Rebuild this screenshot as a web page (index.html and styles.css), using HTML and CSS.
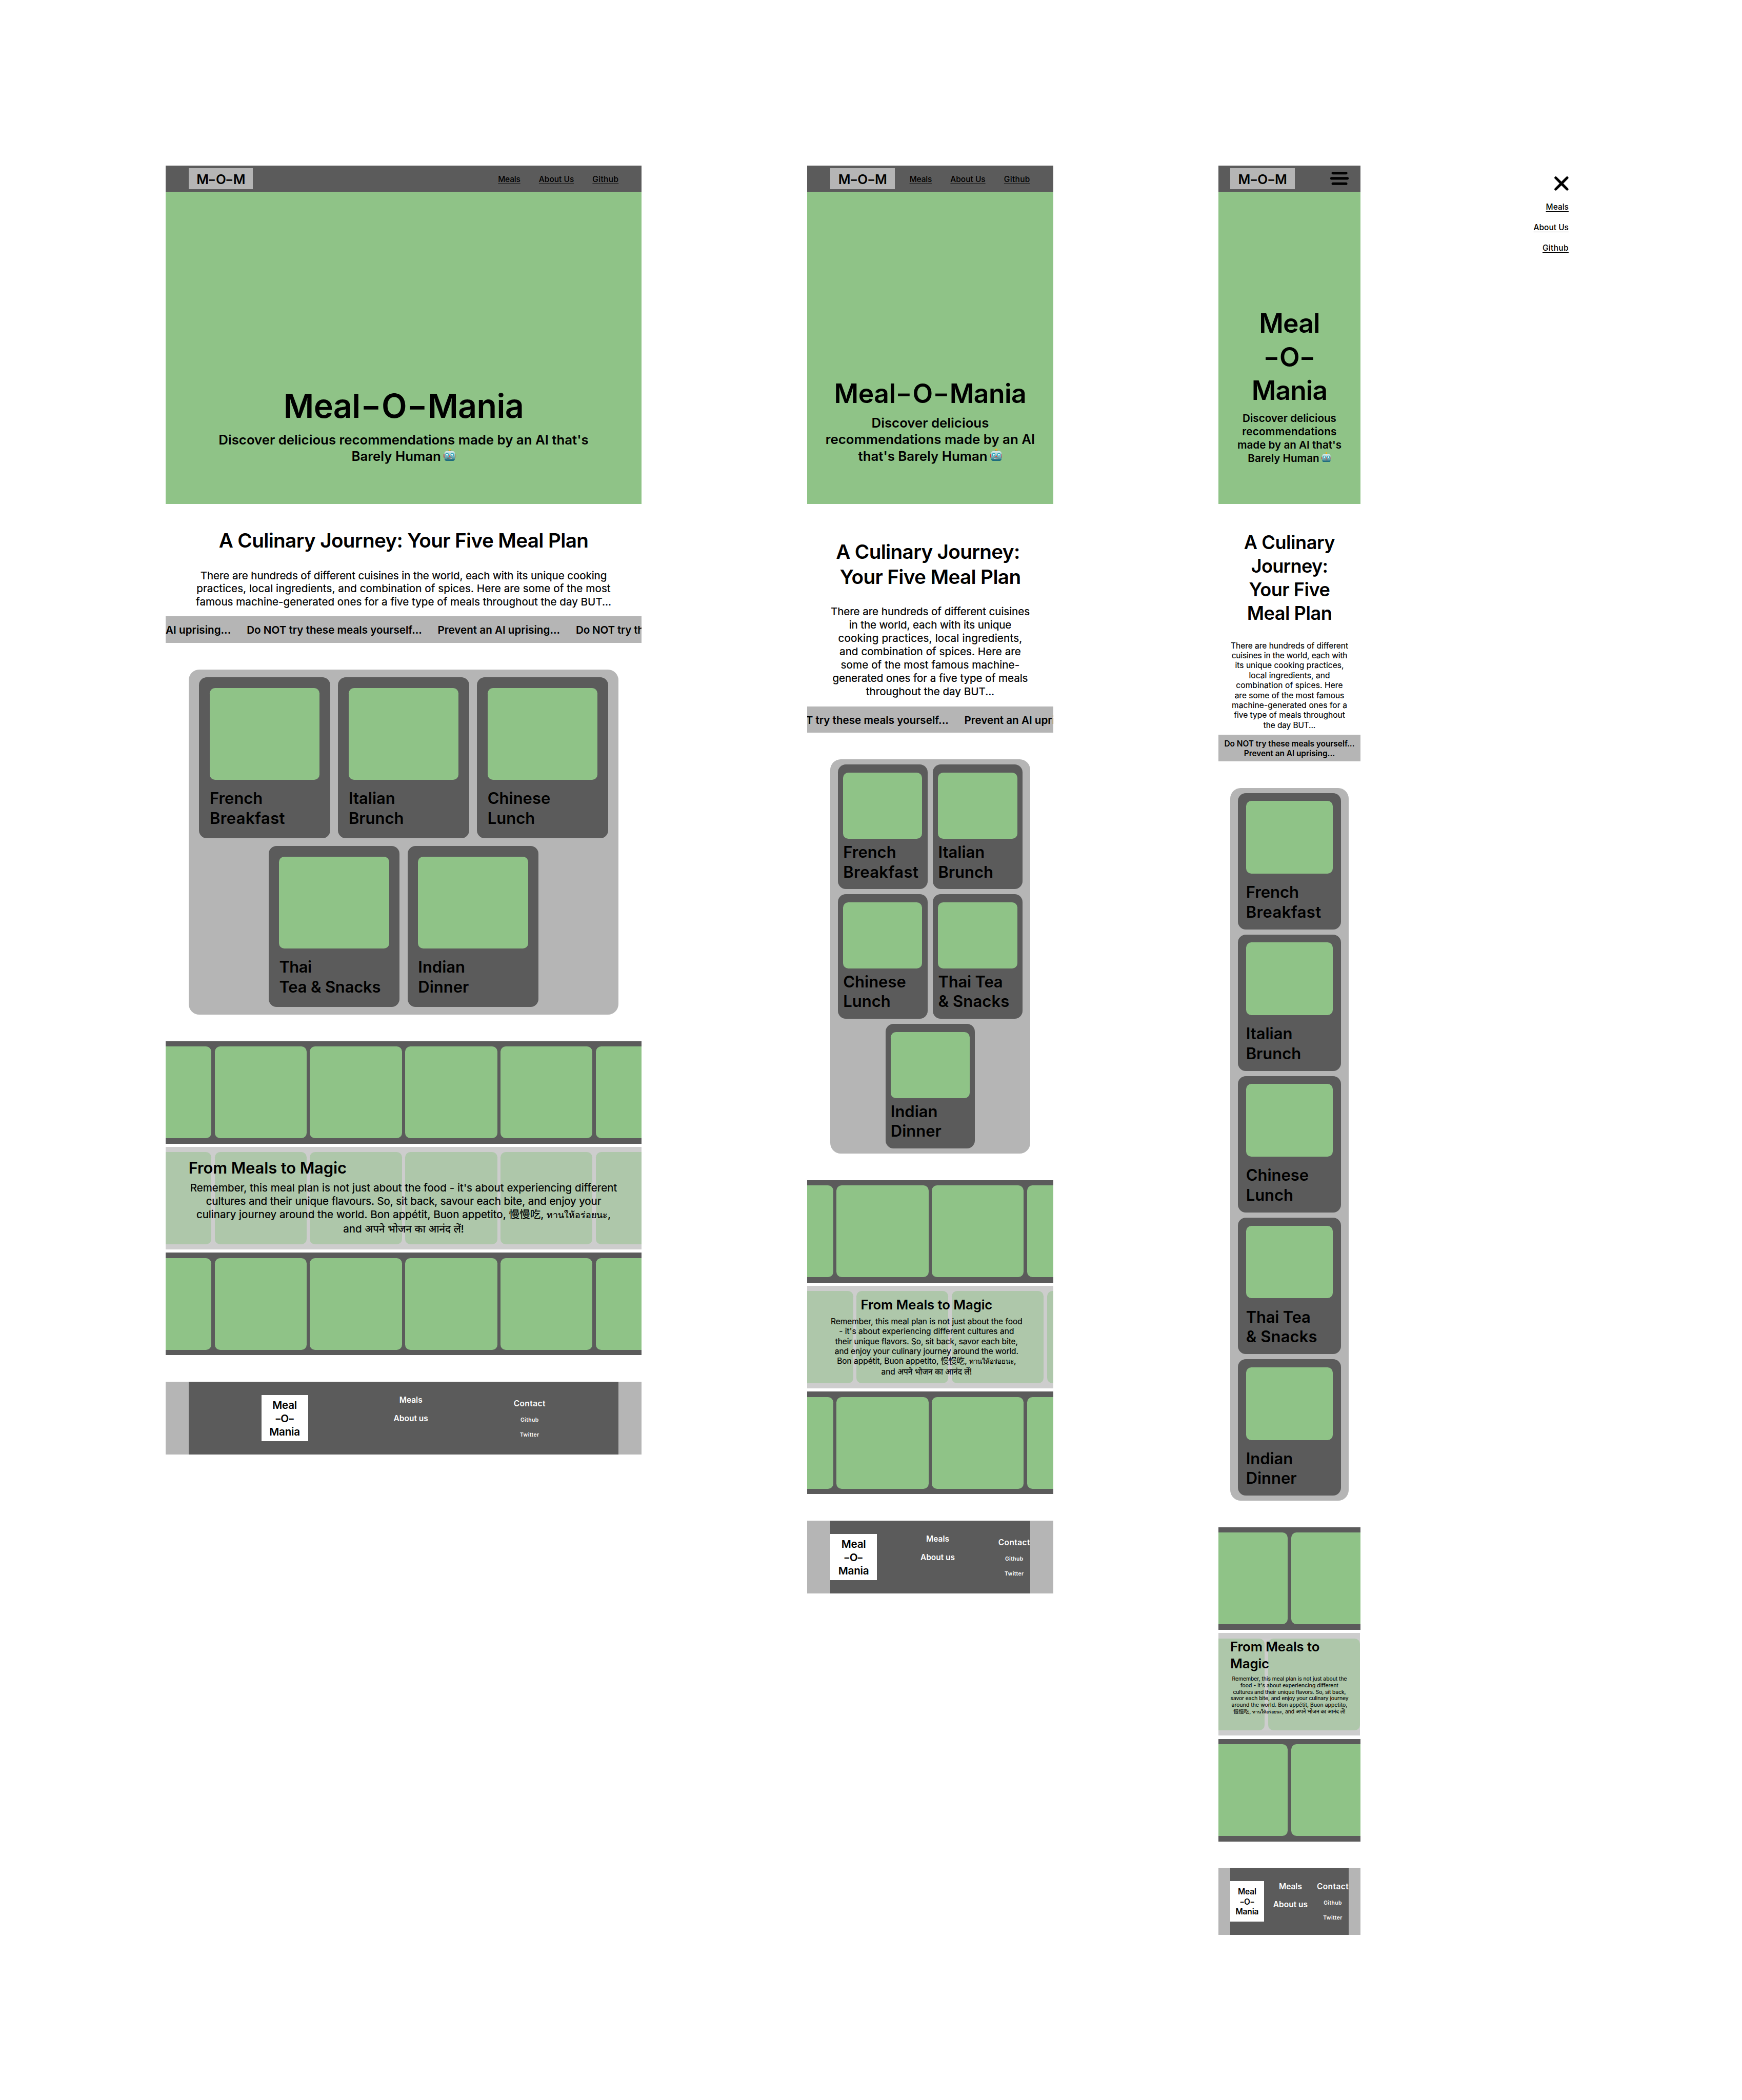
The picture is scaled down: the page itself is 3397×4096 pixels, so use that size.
FILE: index.html
```html
<!DOCTYPE html>
<html lang="en">
<head>
<meta charset="utf-8">
<title>Meal-O-Mania wireframes</title>
<link rel="stylesheet" href="styles.css">
</head>
<body>
<svg class="sprite" aria-hidden="true">
  <defs>
    <linearGradient id="face" x1="0" y1="0" x2="0" y2="1">
      <stop offset="0" stop-color="#dcebea"/>
      <stop offset=".45" stop-color="#8fc0c4"/>
      <stop offset="1" stop-color="#1f7487"/>
    </linearGradient>
  </defs>
  <symbol id="robot" viewBox="0 0 36 37">
    <rect x="0" y="16.500" width="4" height="10.500" rx="1.500" fill="#c8323c"/>
    <rect x="32" y="16.500" width="4" height="10.500" rx="1.500" fill="#c8323c"/>
    <path d="M13.500 7.500C13.500 4.800 22.500 4.800 22.500 7.500L22 9H14Z" fill="#5c4f86"/>
    <circle cx="18" cy="3.200" r="3.100" fill="#f7b21c"/>
    <rect x="2.400" y="7.600" width="31.200" height="29" rx="6.500" fill="url(#face)"/>
    <path d="M3 30C6 33.500 30 33.500 33 30V31C33 34.500 31 36.600 27 36.600H9C5 36.600 3 34.500 3 31Z" fill="#176273" opacity=".6"/>
    <circle cx="10.300" cy="18" r="4.900" fill="#2aa5bd"/>
    <circle cx="25.700" cy="18" r="4.900" fill="#2aa5bd"/>
    <circle cx="10.300" cy="18" r="2.900" fill="#f3fbfa"/>
    <circle cx="25.700" cy="18" r="2.900" fill="#f3fbfa"/>
    <path d="M18 18.800L21 24.300H15Z" fill="#d8504c"/>
    <rect x="11" y="27" width="14" height="3.800" rx="1" fill="#37474f"/>
    <path d="M12 27.800h2v2.200h-2zM15.300 27.800h2v2.200h-2zM18.700 27.800h2v2.200h-2zM22 27.800h2v2.200h-2z" fill="#fff"/>
  </symbol>
</svg>

<main class="board">

<article class="frame desktop">
  <header class="bar">
    <a class="logo">M<b>-</b>O<b>-</b>M</a>
    <nav class="nav"><a>Meals</a><a>About Us</a><a>Github</a></nav>
  </header>
  <section class="hero">
    <h1><span class="line">Meal<b>-</b>O<b>-</b>Mania</span></h1>
    <p>
      <span class="line">Discover delicious recommendations made by an AI that's</span>
      <span class="line">Barely Human <svg class="emoji"><use href="#robot"/></svg></span>
    </p>
  </section>
  <section class="intro">
    <h2><span class="line">A Culinary Journey: Your Five Meal Plan</span></h2>
    <p>
      <span class="line">There are hundreds of different cuisines in the world, each with its unique cooking</span>
      <span class="line">practices, local ingredients, and combination of spices. Here are some of the most</span>
      <span class="line">famous machine-generated ones for a five type of meals throughout the day BUT...</span>
    </p>
  </section>
  <div class="ticker">
    <span class="line">Prevent an AI uprising...</span>
    <span class="line">Do NOT try these meals yourself...</span>
    <span class="line">Prevent an AI uprising...</span>
    <span class="line">Do NOT try these meals yourself...</span>
  </div>
  <section class="meals">
    <div class="card"><div class="photo"></div><h3><span class="line">French</span><span class="line">Breakfast</span></h3></div>
    <div class="card"><div class="photo"></div><h3><span class="line">Italian</span><span class="line">Brunch</span></h3></div>
    <div class="card"><div class="photo"></div><h3><span class="line">Chinese</span><span class="line">Lunch</span></h3></div>
    <div class="card"><div class="photo"></div><h3><span class="line">Thai</span><span class="line">Tea &amp; Snacks</span></h3></div>
    <div class="card"><div class="photo"></div><h3><span class="line">Indian</span><span class="line">Dinner</span></h3></div>
  </section>
  <section class="reel">
    <div class="strip"><i></i><i></i><i></i><i></i><i></i><i></i></div>
    <div class="strip faded"><i></i><i></i><i></i><i></i><i></i><i></i>
      <div class="magic">
        <h2><span class="line">From Meals to Magic</span></h2>
        <p>
          <span class="line">Remember, this meal plan is not just about the food - it's about experiencing different</span>
          <span class="line">cultures and their unique flavours. So, sit back, savour each bite, and enjoy your</span>
          <span class="line">culinary journey around the world. Bon appétit, Buon appetito, <span class="cjk" lang="zh">慢慢吃</span>, <span class="thai" lang="th">ทานให้อร่อยนะ</span>,</span>
          <span class="line">and <span class="hindi" lang="hi">अपने भोजन का आनंद लें!</span></span>
        </p>
      </div>
    </div>
    <div class="strip"><i></i><i></i><i></i><i></i><i></i><i></i></div>
  </section>
  <footer class="foot">
    <div class="foot-in">
      <div class="mark"><span class="line">Meal</span><span class="line"><b>-</b>O<b>-</b></span><span class="line">Mania</span></div>
      <div class="col"><a>Meals</a><a>About us</a></div>
      <div class="col contact"><a>Contact</a><a class="sm">Github</a><a class="sm">Twitter</a></div>
    </div>
  </footer>
</article>

<article class="frame tablet">
  <header class="bar">
    <a class="logo">M<b>-</b>O<b>-</b>M</a>
    <nav class="nav"><a>Meals</a><a>About Us</a><a>Github</a></nav>
  </header>
  <section class="hero">
    <h1><span class="line">Meal<b>-</b>O<b>-</b>Mania</span></h1>
    <p>
      <span class="line">Discover delicious</span>
      <span class="line">recommendations made by an AI</span>
      <span class="line">that's Barely Human <svg class="emoji"><use href="#robot"/></svg></span>
    </p>
  </section>
  <section class="intro">
    <h2><span class="line trail">A Culinary Journey:</span><span class="line">Your Five Meal Plan</span></h2>
    <p>
      <span class="line">There are hundreds of different cuisines</span>
      <span class="line">in the world, each with its unique</span>
      <span class="line">cooking practices, local ingredients,</span>
      <span class="line">and combination of spices. Here are</span>
      <span class="line">some of the most famous machine-</span>
      <span class="line">generated ones for a five type of meals</span>
      <span class="line">throughout the day BUT...</span>
    </p>
  </section>
  <div class="ticker">
    <span class="line">Do NOT try these meals yourself...</span>
    <span class="line">Prevent an AI uprising...</span>
  </div>
  <section class="meals">
    <div class="card"><div class="photo"></div><h3><span class="line">French</span><span class="line">Breakfast</span></h3></div>
    <div class="card"><div class="photo"></div><h3><span class="line">Italian</span><span class="line">Brunch</span></h3></div>
    <div class="card"><div class="photo"></div><h3><span class="line">Chinese</span><span class="line">Lunch</span></h3></div>
    <div class="card"><div class="photo"></div><h3><span class="line">Thai Tea</span><span class="line">&amp; Snacks</span></h3></div>
    <div class="card"><div class="photo"></div><h3><span class="line">Indian</span><span class="line">Dinner</span></h3></div>
  </section>
  <section class="reel">
    <div class="strip"><i></i><i></i><i></i><i></i></div>
    <div class="strip faded"><i></i><i></i><i></i><i></i>
      <div class="magic">
        <h2><span class="line">From Meals to Magic</span></h2>
        <p>
          <span class="line">Remember, this meal plan is not just about the food</span>
          <span class="line">- it's about experiencing different cultures and</span>
          <span class="line">their unique flavors. So, sit back, savor each bite,</span>
          <span class="line">and enjoy your culinary journey around the world.</span>
          <span class="line">Bon appétit, Buon appetito, <span class="cjk" lang="zh">慢慢吃</span>, <span class="thai" lang="th">ทานให้อร่อยนะ</span>,</span>
          <span class="line">and <span class="hindi" lang="hi">अपने भोजन का आनंद लें!</span></span>
        </p>
      </div>
    </div>
    <div class="strip"><i></i><i></i><i></i><i></i></div>
  </section>
  <footer class="foot">
    <div class="foot-in">
      <div class="mark"><span class="line">Meal</span><span class="line"><b>-</b>O<b>-</b></span><span class="line">Mania</span></div>
      <div class="col"><a>Meals</a><a>About us</a></div>
      <div class="col contact"><a>Contact</a><a class="sm">Github</a><a class="sm">Twitter</a></div>
    </div>
  </footer>
</article>

<article class="frame mobile">
  <header class="bar">
    <a class="logo">M<b>-</b>O<b>-</b>M</a>
    <svg class="burger" viewBox="0 0 56 40"><path d="M8 4H48M4 20H52M8 36H48" stroke="#000" stroke-width="8" stroke-linecap="round"/></svg>
  </header>
  <section class="hero">
    <h1><span class="line">Meal</span><span class="line"><b>-</b>O<b>-</b></span><span class="line">Mania</span></h1>
    <p>
      <span class="line">Discover delicious</span>
      <span class="line">recommendations</span>
      <span class="line">made by an AI that's</span>
      <span class="line">Barely Human <svg class="emoji"><use href="#robot"/></svg></span>
    </p>
  </section>
  <section class="intro">
    <h2><span class="line">A Culinary</span><span class="line">Journey:</span><span class="line">Your Five</span><span class="line">Meal Plan</span></h2>
    <p>
      <span class="line">There are hundreds of different</span>
      <span class="line">cuisines in the world, each with</span>
      <span class="line">its unique cooking practices,</span>
      <span class="line">local ingredients, and</span>
      <span class="line">combination of spices. Here</span>
      <span class="line">are some of the most famous</span>
      <span class="line">machine-generated ones for a</span>
      <span class="line">five type of meals throughout</span>
      <span class="line">the day BUT...</span>
    </p>
  </section>
  <div class="ticker">
    <span class="line">Do NOT try these meals yourself...</span>
    <span class="line">Prevent an AI uprising...</span>
  </div>
  <section class="meals">
    <div class="card"><div class="photo"></div><h3><span class="line">French</span><span class="line">Breakfast</span></h3></div>
    <div class="card"><div class="photo"></div><h3><span class="line">Italian</span><span class="line">Brunch</span></h3></div>
    <div class="card"><div class="photo"></div><h3><span class="line">Chinese</span><span class="line">Lunch</span></h3></div>
    <div class="card"><div class="photo"></div><h3><span class="line">Thai Tea</span><span class="line">&amp; Snacks</span></h3></div>
    <div class="card"><div class="photo"></div><h3><span class="line">Indian</span><span class="line">Dinner</span></h3></div>
  </section>
  <section class="reel">
    <div class="strip"><i></i><i></i></div>
    <div class="strip faded"><i></i><i></i>
      <div class="magic">
        <h2><span class="line">From Meals to</span><span class="line">Magic</span></h2>
        <p>
          <span class="line">Remember, this meal plan is not just about the</span>
          <span class="line">food - it's about experiencing different</span>
          <span class="line">cultures and their unique flavors. So, sit back,</span>
          <span class="line">savor each bite, and enjoy your culinary journey</span>
          <span class="line">around the world. Bon appétit, Buon appetito,</span>
          <span class="line"><span class="cjk" lang="zh">慢慢吃</span>, <span class="thai" lang="th">ทานให้อร่อยนะ</span>, and <span class="hindi" lang="hi">अपने भोजन का आनंद लें!</span></span>
        </p>
      </div>
    </div>
    <div class="strip"><i></i><i></i></div>
  </section>
  <footer class="foot">
    <div class="foot-in">
      <div class="mark"><span class="line">Meal</span><span class="line"><b>-</b>O<b>-</b></span><span class="line">Mania</span></div>
      <div class="col"><a>Meals</a><a>About us</a></div>
      <div class="col contact"><a>Contact</a><a class="sm">Github</a><a class="sm">Twitter</a></div>
    </div>
  </footer>
</article>

<nav class="menu">
  <svg class="close" viewBox="0 0 43 43"><path d="M4.300 4.300L38.700 38.700M38.700 4.300L4.300 38.700" stroke="#000" stroke-width="8" stroke-linecap="round"/></svg>
  <a>Meals</a><a>About Us</a><a>Github</a>
</nav>

</main>
</body>
</html>
```

FILE: styles.css
```css
/* 1rem = 10 design pixels; the 5266px board is scaled to the 3397px window. */
html { font-size: 6.45082px; }
*, *::before, *::after { box-sizing: border-box; }
body { margin: 0; background: #fff; color: #000; font-family: Inter, "Noto Sans", "Noto Sans CJK SC", sans-serif; }
h1, h2, h3, p { margin: 0; font-weight: 600; }
/* wide hyphens of the wordmark */
b { display: inline-block; width: .56em; font-weight: inherit; letter-spacing: 0; text-align: center; transform: scaleX(1.35); }
h1 b { width: .64em; }
.mobile h1 b { width: .6em; }
.mark b { width: .52em; }
.sprite { position: absolute; width: 0; height: 0; }
.line { display: block; white-space: nowrap; }

.board { display: flex; align-items: flex-start; gap: 50rem; width: 526.6rem; height: 635rem; padding: 50rem 0 0 50rem; overflow: hidden; }
.frame { flex: none; display: flex; flex-direction: column; text-align: center; }
.desktop { width: 144rem; }
.tablet { width: 74.4rem; }
.mobile { width: 42.8rem; }

/* header */
.bar { display: flex; align-items: center; justify-content: space-between; height: 8rem; padding: 0 7rem; background: #5b5b5b; }
.logo { width: 19.5rem; height: 6.4rem; padding-top: .15rem; background: #b5b5b5; font-size: 4rem; font-weight: 600; line-height: 6.4rem; letter-spacing: -.02em; white-space: nowrap; }
.nav { display: flex; gap: 5.6rem; }
.nav a, .menu a { font-size: 2.4rem; font-weight: 500; line-height: 3rem; white-space: nowrap; text-decoration: underline; text-decoration-thickness: .12rem; text-underline-offset: .45rem; }
.nav a { padding-top: .46rem; }
.nav a:first-child { letter-spacing: -.01em; }
.nav a:last-child, .menu a:last-child { letter-spacing: .022em; }
.burger { width: 5.6rem; height: 4rem; fill: none; }
.mobile .bar { padding: 0 3.5rem; }

/* hero */
.hero { height: 94.4rem; background: #8fc387; }
.emoji { width: .92em; height: .94em; margin-left: -.06em; vertical-align: -.01em; }
.hero h1 { letter-spacing: -.009em; }
.hero p { font-size: 4rem; line-height: 5.04rem; }
.desktop .hero { padding-top: 58.56rem; }
.desktop h1 { font-size: 10rem; line-height: 12.6rem; margin-bottom: 1.36rem; }
.tablet .hero { padding-top: 56rem; }
.tablet h1 { font-size: 8rem; line-height: 10.08rem; margin-bottom: 1.3rem; }
.mobile .hero { padding-top: 34.78rem; }
.mobile .hero h1 { font-size: 8rem; line-height: 10.08rem; margin-bottom: 1.52rem; letter-spacing: -.017em; }
.mobile .hero p { font-size: 3.2rem; line-height: 4rem; }
.mobile .hero p .line:nth-child(2) { letter-spacing: .013em; }

/* introduction */
.intro h2 { font-size: 6rem; line-height: 7.56rem; letter-spacing: -.0172em; }
.intro p, .magic p { font-weight: 400; -webkit-text-stroke: .012em #000; }
.intro p { font-size: 3.2rem; line-height: 4rem; }
.desktop .intro { height: 34rem; padding-top: 7.28rem; }
.desktop .intro p { margin-top: 4.77rem; }
.desktop .intro p .line:nth-child(1) { letter-spacing: -.005em; }
.desktop .intro p .line:nth-child(2) { letter-spacing: .0033em; }
.tablet .intro { height: 61.2rem; padding-top: 10.74rem; }
.tablet .intro p { margin-top: 4.72rem; line-height: 4.03rem; }
.tablet .intro p .line:nth-child(1) { letter-spacing: -.0036em; }
.tablet .intro p .line:nth-child(2) { letter-spacing: -.0061em; }
.tablet .intro p .line:nth-child(3) { letter-spacing: .0097em; }
.tablet .intro p .line:nth-child(4) { letter-spacing: .0022em; }
.tablet .intro p .line:nth-child(5) { letter-spacing: .0039em; }
.tablet .intro p .line:nth-child(6) { letter-spacing: -.0028em; }
.tablet .trail { padding-right: 1.4rem; }
.mobile .intro { height: 69.8rem; padding-top: 8.17rem; }
.mobile .intro h2 { font-size: 5.6rem; line-height: 7.12rem; letter-spacing: -.013em; }
.mobile .intro h2 .line:nth-child(2) { letter-spacing: -.02em; }
.mobile .intro p { margin-top: 4.68rem; font-size: 2.4rem; line-height: 3rem; }
.mobile .intro p .line:nth-child(2), .mobile .intro p .line:nth-child(9) { letter-spacing: -.008em; }
.mobile .intro p .line:nth-child(3), .mobile .intro p .line:nth-child(4) { letter-spacing: .005em; }
.mobile .intro p .line:nth-child(5), .mobile .intro p .line:nth-child(7) { letter-spacing: .008em; }
.mobile .intro p .line:nth-child(8) { letter-spacing: .0027em; }

/* scrolling warning */
.ticker { display: flex; justify-content: flex-start; height: 8rem; padding-top: 2.14rem; overflow: hidden; background: #b5b5b5; font-size: 3.2rem; font-weight: 600; line-height: 4rem; }
.ticker .line { flex: none; width: 41.8rem; text-align: left; }
.ticker .line:nth-child(even) { width: 57.7rem; }
.desktop .ticker .line:first-child { margin-left: -17.2rem; }
.desktop .ticker .line:last-child { letter-spacing: -.01em; }
.tablet .ticker .line:first-child { width: 57.7rem; margin-left: -10.2rem; }
.mobile .ticker { display: block; padding-top: 1.18rem; font-size: 2.4rem; line-height: 3rem; letter-spacing: -.004em; }
.mobile .ticker .line, .mobile .ticker .line:nth-child(even) { width: auto; text-align: center; }

/* meal cards */
.meals { display: flex; flex-wrap: wrap; justify-content: center; align-self: center; margin-top: 8rem; border-radius: 3.2rem; background: #b5b5b5; text-align: left; }
.card { border-radius: 2.4rem; background: #5b5b5b; }
.photo { border-radius: 1.6rem; background: #8fc387; }
.card h3 { font-size: 4.8rem; line-height: 6rem; }
.desktop .meals { width: 130rem; padding: 2.4rem 3.2rem; gap: 2.4rem; }
.desktop .card { width: 39.6rem; height: 48.6rem; padding: 3.2rem; }
.desktop .photo { height: 27.8rem; margin-bottom: 2.69rem; }
.tablet .meals { width: 60.4rem; padding: 1.6rem 2.2rem; gap: 1.6rem; }
.tablet .card { width: 27.1rem; height: 37.6rem; padding: 2.4rem 1.6rem; }
.tablet .photo { height: 20rem; margin-bottom: 1.08rem; }
.mobile .meals { width: 35.8rem; padding: 1.6rem 0; gap: 1.6rem; }
.mobile .card { width: 31.1rem; height: 41.2rem; padding: 2.4rem; }
.mobile .photo { height: 22rem; margin-bottom: 2.65rem; }
.card:nth-child(1) .line:last-child { letter-spacing: .0135em; }
.card:nth-child(4) .line { letter-spacing: -.0056em; }
.desktop .card:nth-child(4) .line:first-child { letter-spacing: -.017em; }
.tablet .card:nth-child(4) .line:last-child, .mobile .card:nth-child(4) .line:last-child { letter-spacing: .005em; }

/* film strips */
.reel { display: flex; flex-direction: column; gap: 1rem; margin-top: 8rem; }
.strip { position: relative; display: flex; justify-content: center; gap: 1rem; height: 31rem; padding: 1.6rem 0; overflow: hidden; background: #5b5b5b; }
.strip i { flex: none; width: 27.8rem; border-radius: 1.6rem; background: #8fc387; }
.faded { background: #cdcdcd; }
.faded i { background: #aec7aa; }
.tablet .faded i:first-child { margin-left: 12rem; }
.mobile .faded { width: 42.7rem; justify-content: flex-end; }
.magic { position: absolute; }
.magic h2 { letter-spacing: -.004em; }
.thai { font-size: .86em; }
.desktop .magic { top: 3.41rem; left: 7rem; width: 130rem; }
.desktop .magic h2 { font-size: 4.8rem; line-height: 6rem; text-align: left; }
.desktop .magic p { margin-top: .97rem; font-size: 3.2rem; line-height: 4rem; }
.desktop .magic p .line { height: 4rem; }
.desktop .magic p .line:nth-child(1) { letter-spacing: .0017em; }
.desktop .magic p .line:nth-child(2) { letter-spacing: -.0058em; }
.desktop .magic p .line:last-child { margin-top: .4rem; }
.tablet .magic { top: 3.34rem; left: 7rem; width: 58.2rem; }
.tablet .magic h2 { font-size: 4rem; line-height: 5rem; }
.tablet .magic p { margin-top: .99rem; font-size: 2.4rem; line-height: 3rem; }
.tablet .magic p .line { height: 3rem; }
.tablet .magic p .line:nth-child(2) { letter-spacing: .0031em; }
.tablet .magic p .line:nth-child(3) { letter-spacing: -.0044em; }
.tablet .magic p .line:nth-child(4) { letter-spacing: -.0063em; }
.tablet .magic p .line:last-child { margin-top: .2rem; }
.mobile .magic { top: 1.72rem; left: 3.5rem; width: 35.8rem; }
.mobile .magic h2 { font-size: 4rem; line-height: 5rem; text-align: left; }
.mobile .magic p { margin-top: 1.11rem; font-size: 1.6rem; line-height: 1.98rem; }
.mobile .magic p .line { height: 1.98rem; }
.mobile .magic p .line:nth-child(2) { letter-spacing: .0082em; }
.mobile .magic p .line:nth-child(3) { letter-spacing: -.005em; }
.mobile .magic p .line:nth-child(4) { letter-spacing: -.0076em; }
.mobile .magic p .line:nth-child(5) { letter-spacing: .0109em; }

/* footer */
.foot { margin-top: 8rem; padding: 0 7rem; background: #b5b5b5; }
.foot-in { display: flex; justify-content: space-between; align-items: flex-start; height: 22rem; padding-top: 4rem; background: #5b5b5b; color: #fff; font-weight: 600; }
.desktop .foot-in { padding: 4rem 22.1rem 0 22rem; }
.mark { width: 14.1rem; height: 14rem; padding-top: 1.1rem; background: #fff; color: #000; font-size: 3.2rem; line-height: 4.02rem; letter-spacing: -.01em; }
.col { display: flex; flex-direction: column; align-items: center; gap: 2.47rem; width: 10.3rem; padding-top: .1rem; font-size: 2.4rem; line-height: 3rem; white-space: nowrap; }
.contact { gap: 2.4rem; width: 9.6rem; padding-top: 1.2rem; letter-spacing: .028em; }
.col .sm { font-size: 1.6rem; line-height: 2rem; }
.mobile .foot { padding: 0 3.5rem; }
.mobile .foot-in { height: 20.2rem; }
.mobile .mark { width: 10.2rem; height: 12.2rem; padding-top: 1.73rem; font-size: 2.4rem; line-height: 3.02rem; }
.mobile .col { gap: 2.35rem; padding-top: .18rem; }
.mobile .contact { gap: 2.4rem; padding-top: .23rem; }

/* opened mobile menu */
.menu { display: flex; flex-direction: column; align-items: flex-end; gap: 3.2rem; width: 15.4rem; padding: 3.4rem 2.4rem 0 0; }
.close { width: 4.3rem; height: 4.3rem; margin-bottom: .2rem; fill: none; }
```
